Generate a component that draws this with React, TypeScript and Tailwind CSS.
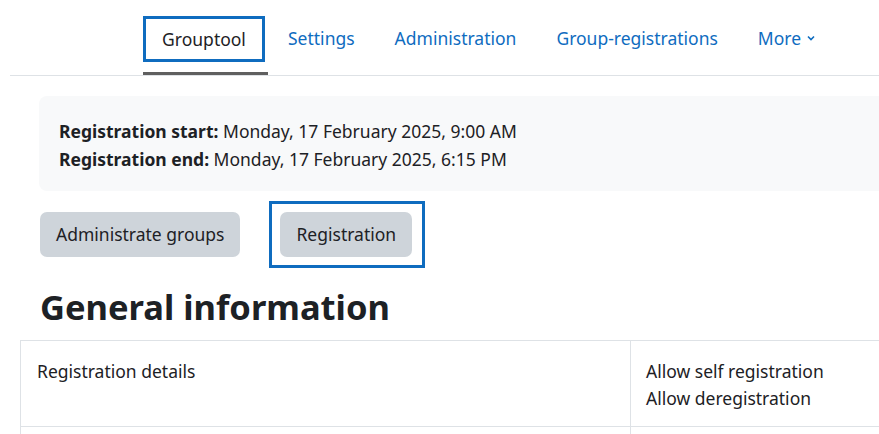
const NAV = ['Settings', 'Administration', 'Group-registrations'];

export default function App() {
  return (
    <div className="w-[879px] h-[434px] overflow-hidden bg-white text-[#1d2125] text-[17.5px]" style={{ fontFamily: '"Noto Sans", "Open Sans", sans-serif' }}>
      {/* tabs */}
      <div className="ml-[10px] h-[76px] border-b border-[#dee2e6] flex items-stretch pl-[133px]">
        <div className="flex flex-col">
          <div className="mt-[16px] h-[46px] w-[122px] border-[3px] border-[#0f6cbf] flex items-center justify-center text-[#1d2125]">
            Grouptool
          </div>
          <div className="mt-auto h-[3px] w-[125px] bg-[#5f5f5f]" />
        </div>
        <div className="flex items-start pt-[25px] text-[#0f6cbf]">
          {NAV.map((n, i) => (
            <span key={n} className={i === 0 ? 'ml-[20px]' : 'ml-[40px]'}>{n}</span>
          ))}
          <span className="ml-[40px] flex items-center gap-[5px]">
            More
            <svg width="10" height="10" viewBox="0 0 10 10" fill="none" stroke="currentColor" strokeWidth="1.6">
              <path d="M2 3.5 L5 6.5 L8 3.5" />
            </svg>
          </span>
        </div>
      </div>

      {/* dates box */}
      <div className="ml-[39px] mt-[20px] h-[95px] bg-[#f8f9fa] rounded-l-[8px] flex flex-col justify-center pl-[20px] pt-[2px] leading-[28px]">
        <p><b>Registration start:</b> Monday, 17 February 2025, 9:00 AM</p>
        <p><b>Registration end:</b> Monday, 17 February 2025, 6:15 PM</p>
      </div>

      {/* buttons */}
      <div className="mt-[10px] ml-[40px] flex items-center">
        <div className="h-[45px] px-[16px] flex items-center bg-[#ced4da] rounded-[7px]">Administrate groups</div>
        <div className="ml-[29px] pl-[8px] pr-[10px] py-[8px] border-[3px] border-[#0f6cbf]">
          <div className="h-[45px] px-[16px] flex items-center justify-center bg-[#ced4da] rounded-[7px]">Registration</div>
        </div>
      </div>

      <h2 className="ml-[40px] mt-[15px] text-[34.5px] font-bold leading-[48px]">General information</h2>

      {/* table */}
      <div className="ml-[20px] mt-[9px] border-t border-l border-[#dee2e6] grid grid-cols-[610px_1fr]">
        <div className="h-[86px] border-b border-r border-[#dee2e6] pl-[16px] pt-[17px]">Registration details</div>
        <div className="h-[86px] border-b border-[#dee2e6] pl-[15px] pt-[17px] leading-[27px]">
          <p>Allow self registration</p>
          <p>Allow deregistration</p>
        </div>
        <div className="h-[20px] border-r border-[#dee2e6]" />
        <div />
      </div>
    </div>
  );
}
